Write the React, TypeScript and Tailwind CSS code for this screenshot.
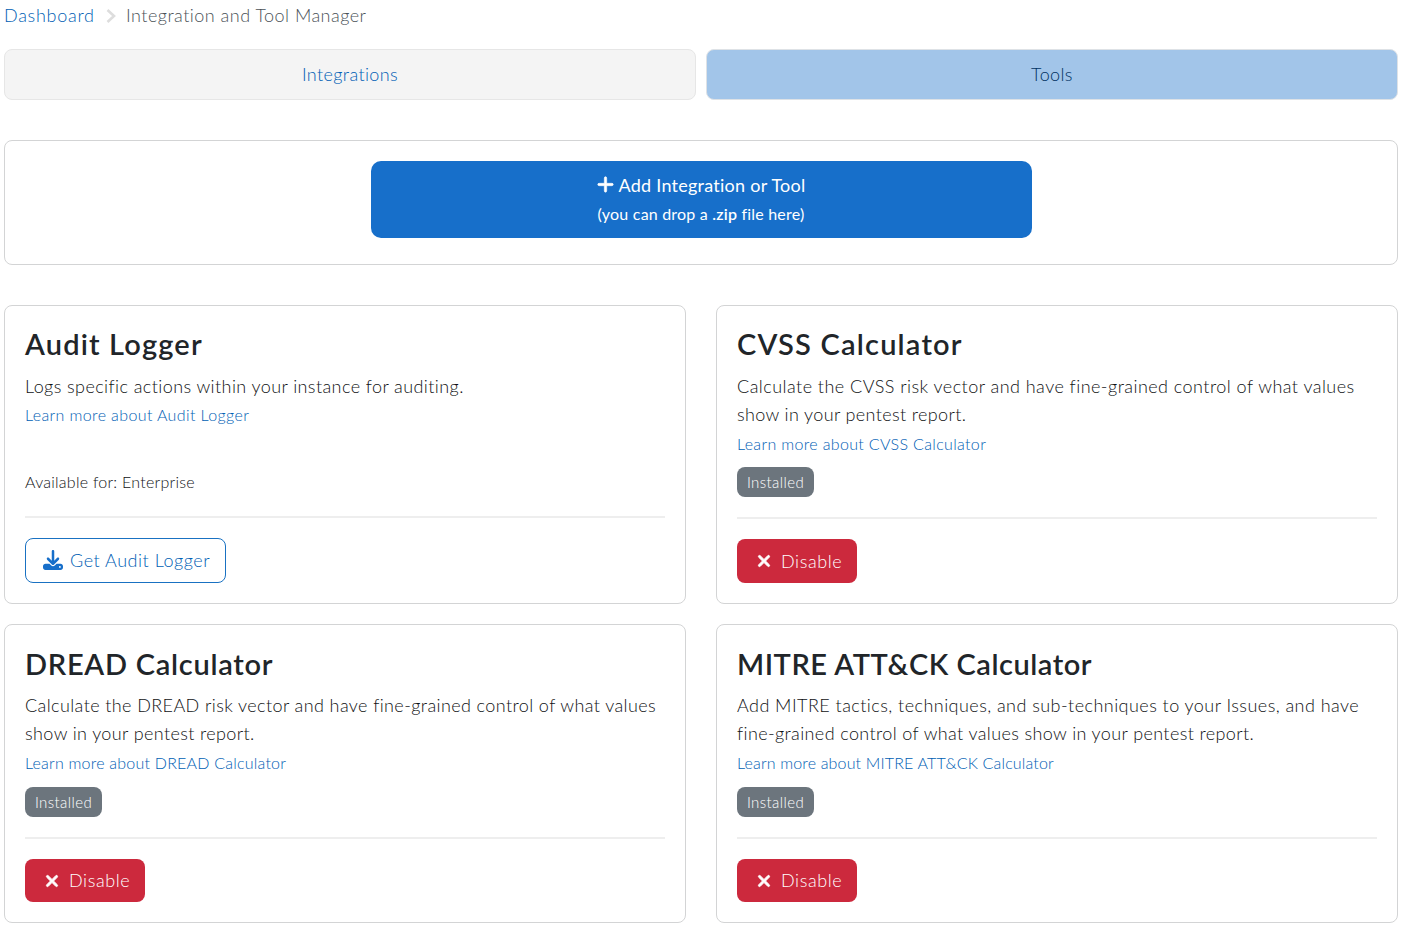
import { FaDownload, FaPlus, FaXmark } from "react-icons/fa6";

interface Tool {
  name: string;
  nameStyle: string;
  description: string[];
  descriptionStyle: string[];
  linkStyle: string;
  installed: boolean;
  buttonStyle: string;
}

const tools: Tool[] = [
  {
    name: "Audit Logger",
    nameStyle: "leading-[36px] tracking-[1.15px]",
    description: ["Logs specific actions within your instance for auditing."],
    descriptionStyle: ["tracking-[0.41px]"],
    linkStyle: "tracking-[0.38px]",
    installed: false,
    buttonStyle: "h-[45px]",
  },
  {
    name: "CVSS Calculator",
    nameStyle: "leading-[36px] tracking-[1.2px]",
    description: [
      "Calculate the CVSS risk vector and have fine-grained control of what values",
      "show in your pentest report.",
    ],
    descriptionStyle: ["tracking-[0.46px]", "tracking-[0.37px]"],
    linkStyle: "mt-px tracking-[0.34px]",
    installed: true,
    buttonStyle: "h-[44px]",
  },
  {
    name: "DREAD Calculator",
    nameStyle: "leading-[37px] tracking-[0.73px]",
    description: [
      "Calculate the DREAD risk vector and have fine-grained control of what values",
      "show in your pentest report.",
    ],
    descriptionStyle: ["tracking-[0.4px]", "tracking-[0.38px]"],
    linkStyle: "mt-px tracking-[0.22px]",
    installed: true,
    buttonStyle: "h-[43px]",
  },
  {
    name: "MITRE ATT&CK Calculator",
    nameStyle: "leading-[37px] tracking-[0.53px]",
    description: [
      "Add MITRE tactics, techniques, and sub-techniques to your Issues, and have",
      "fine-grained control of what values show in your pentest report.",
    ],
    descriptionStyle: ["tracking-[0.45px]", "tracking-[0.38px]"],
    linkStyle: "mt-px tracking-[0.16px]",
    installed: true,
    buttonStyle: "h-[43px]",
  },
];

function ToolCard({ tool }: { tool: Tool }) {
  return (
    <section className="flex h-[299px] flex-col items-start rounded-lg border border-[#d3d4d5] bg-white p-5 whitespace-nowrap">
      <h2 className={`h-[46px] text-[29px] font-semibold text-[#212529] ${tool.nameStyle}`}>
        <span>{tool.name}</span>
      </h2>
      {tool.description.map((line, i) => (
        <p key={line} className={`text-[18px] leading-7 ${tool.descriptionStyle[i]}`}>
          <span>{line}</span>
        </p>
      ))}
      <a href="#" className={`text-[16px] leading-[29px] text-[#0060b4] ${tool.linkStyle}`}>
        Learn more about {tool.name}
      </a>

      {/* Status and action stay pinned to the bottom of the card */}
      <div className="mt-auto flex w-full flex-col items-start">
        {tool.installed ? (
          <span className="h-[30px] w-[77px] rounded-lg bg-[#6c757d] text-center text-[15px] leading-[31px] tracking-[0.4px] text-white">
            Installed
          </span>
        ) : (
          <span className="h-[30px] text-[16px] leading-8 tracking-[0.25px]">Available for: Enterprise</span>
        )}
        <hr className="my-5 w-full border-t-2 border-[#eeeeee]" />
        {tool.installed ? (
          <button
            className={`flex w-[120px] items-center rounded-lg bg-[#cc293d] pl-[18px] text-[18px] tracking-[0.6px] text-white ${tool.buttonStyle}`}
          >
            <FaXmark className="mr-2 size-[18px] stroke-current stroke-[24]" />
            <span>Disable</span>
          </button>
        ) : (
          <button
            className={`flex w-[201px] items-center rounded-lg border border-[#1971c2] pl-[17px] text-[18px] tracking-[0.53px] text-[#0060b4] ${tool.buttonStyle}`}
          >
            <FaDownload className="mr-[7px] mb-0.5 size-5 text-[#176fca]" />
            <span>Get {tool.name}</span>
          </button>
        )}
      </div>
    </section>
  );
}

export default function App() {
  return (
    <main className="h-[932px] w-[1403px] overflow-hidden bg-white px-1 pr-[5px] font-['Lato',sans-serif] font-light text-[#101214]">
      <nav className="flex h-[49px] items-start text-[18px] leading-[31px]">
        <a href="#" className="w-[102px] tracking-[0.72px] text-[#0060b4]">
          Dashboard
        </a>
        <svg className="mt-[9px] mr-2.5 h-[14px] w-2.5" viewBox="0 0 10 14" fill="none" stroke="#dddddd" strokeWidth="2.6">
          <path d="M1.5 1 L8 7 L1.5 13" />
        </svg>
        <span className="tracking-[0.48px] text-[#4b5258]">Integration and Tool Manager</span>
      </nav>

      <div className="grid h-[51px] grid-cols-2 gap-2.5 text-[18px] tracking-[0.38px]">
        <button className="rounded-lg border border-[#e6e6e6] bg-[#f4f4f4] text-[#0060b4]">Integrations</button>
        <button className="rounded-lg border border-[#dee2e6] bg-[#a2c5e9] text-[#003262]">Tools</button>
      </div>

      <div className="mt-10 flex h-[125px] items-start justify-center rounded-lg border border-[#d3d4d5] pt-5">
        <button className="flex h-[77px] w-[661px] flex-col items-center rounded-[10px] bg-[#176fca] pt-2.5 font-normal text-white">
          <span className="flex items-center gap-[3px] text-[18px] leading-7 tracking-[0.25px]">
            <FaPlus className="mb-px size-[19px] stroke-current stroke-[16]" />
            <span>Add Integration or Tool</span>
          </span>
          <span className="text-[16px] leading-[30px] tracking-[0.2px]">
            (you can drop a <span className="font-semibold">.zip</span> file here)
          </span>
        </button>
      </div>

      <div className="mt-10 grid grid-cols-2 gap-x-[30px] gap-y-5">
        {tools.map((tool) => (
          <ToolCard key={tool.name} tool={tool} />
        ))}
      </div>
    </main>
  );
}
